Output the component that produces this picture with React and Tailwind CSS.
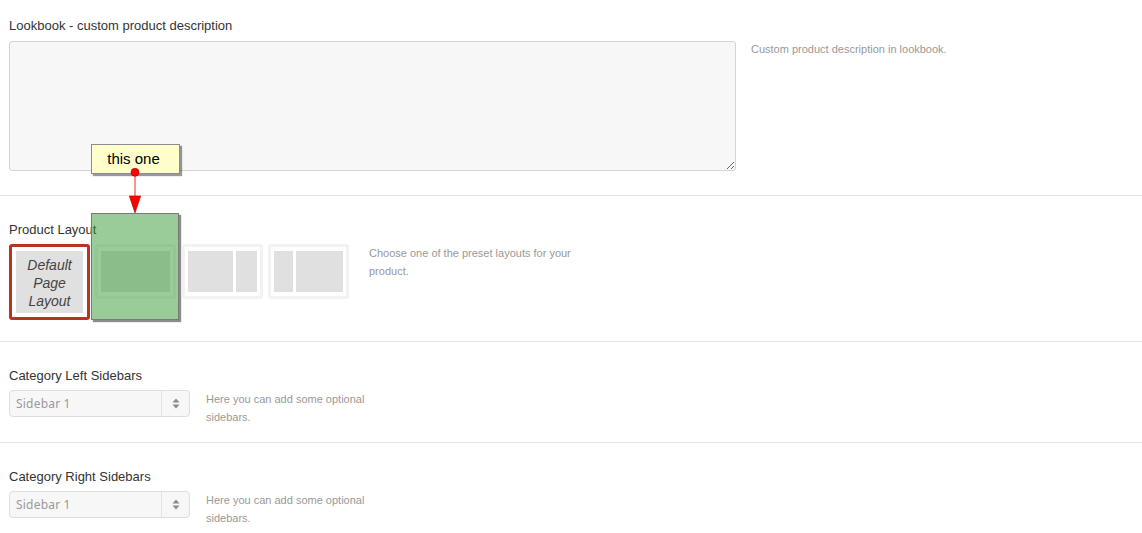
import React from "react";

function HelpText({ className = "", children }) {
  return (
    <p className={`text-[11px] leading-[18px] text-[#999] ${className}`}>{children}</p>
  );
}

function Thumb({ children }) {
  return (
    <div className="w-[81px] h-[55px] bg-[#f2f2f2] rounded-[3px] p-[3px]">
      <div className="h-full bg-white px-[3px] py-[4px] flex gap-[3px]">{children}</div>
    </div>
  );
}

function SelectBox() {
  return (
    <div className="w-[181px] h-[27px] border border-[#dedede] bg-[#f7f7f7] rounded-[4px] flex items-center">
      <span className="flex-1 pl-[6px] text-[12px] text-[#999] font-['Noto_Sans','Open_Sans',sans-serif] tracking-[0.2px]">
        Sidebar 1
      </span>
      <span className="w-[28px] h-full border-l border-[#e3e3e3] flex items-center justify-center">
        <svg width="8" height="11" viewBox="0 0 8 11">
          <path d="M4 0.5 L7.5 4.5 H0.5 Z" fill="#8a8a8a" />
          <path d="M4 10.5 L7.5 6.5 H0.5 Z" fill="#8a8a8a" />
        </svg>
      </span>
    </div>
  );
}

function SidebarSection({ title }) {
  return (
    <section className="px-[9px] pt-[24px] pb-[16px] border-b border-[#e3e3e3]">
      <h3 className="text-[13px] leading-5 text-[#333]">{title}</h3>
      <div className="mt-[4px] flex items-start gap-[16px]">
        <SelectBox />
        <HelpText className="w-[170px]">Here you can add some optional sidebars.</HelpText>
      </div>
    </section>
  );
}

export default function App() {
  return (
    <div className="relative w-[1142px] h-[533px] overflow-hidden bg-white font-['Liberation_Sans',Arial,sans-serif] text-[#333]">
      {/* lookbook description */}
      <section className="px-[9px] pt-[16px] pb-[24px] border-b border-[#e3e3e3]">
        <h3 className="text-[13px] leading-5">Lookbook - custom product description</h3>
        <div className="mt-[5px] flex items-start gap-[15px]">
          <textarea className="block w-[727px] h-[130px] border border-[#d4d4d4] rounded-[3px] bg-[#f7f7f7] outline-none" />
          <HelpText className="-mt-[1px]">Custom product description in lookbook.</HelpText>
        </div>
      </section>

      {/* product layout */}
      <section className="px-[9px] pt-[24px] pb-[21px] border-b border-[#e3e3e3]">
        <h3 className="text-[13px] leading-5">Product Layout</h3>
        <div className="mt-[4px] flex items-start">
          <div className="w-[81px] h-[76px] border-[3px] border-[#b93224] rounded-[3px] p-[4px] bg-white">
            <div className="h-full bg-[#e0e0e0] flex items-center justify-center text-center italic text-[14px] leading-[18px] text-[#444] pt-[1px]">
              Default
              <br />
              Page
              <br />
              Layout
            </div>
          </div>
          <div className="ml-[5px]">
            <Thumb>
              <div className="flex-1 bg-[#e0e0e0]" />
            </Thumb>
          </div>
          <div className="ml-[6px]">
            <Thumb>
              <div className="w-[45px] bg-[#e0e0e0]" />
              <div className="flex-1 bg-[#e0e0e0]" />
            </Thumb>
          </div>
          <div className="ml-[5px]">
            <Thumb>
              <div className="w-[19px] bg-[#e0e0e0]" />
              <div className="flex-1 bg-[#e0e0e0]" />
            </Thumb>
          </div>
          <HelpText className="ml-[20px] w-[215px]">
            Choose one of the preset layouts for your product.
          </HelpText>
        </div>
      </section>

      <SidebarSection title="Category Left Sidebars" />
      <SidebarSection title="Category Right Sidebars" />

      {/* annotation overlay */}
      <div className="absolute left-[91px] top-[213px] w-[88px] h-[107px] bg-[rgba(51,153,51,0.5)] border border-[#7a7a7a] shadow-[2px_2px_1px_rgba(0,0,0,0.45)]" />
      <div className="absolute left-[91px] top-[144px] w-[89px] h-[30px] bg-[#ffffcc] border border-[#8c8c8c] shadow-[2px_2px_1px_rgba(0,0,0,0.4)] flex items-center justify-center pr-[4px] text-[15px] text-black">
        this one
      </div>
      <svg className="absolute left-[125px] top-[165px]" width="20" height="50" viewBox="0 0 20 50">
        <line x1="10" y1="7" x2="10" y2="32" stroke="#f07070" strokeWidth="1.5" />
        <path d="M4.3 31 L15.7 31 L10 48 Z" fill="#ff0000" stroke="#b00000" strokeWidth="0.6" />
        <circle cx="10" cy="7.3" r="4" fill="#ff0000" stroke="#a00000" strokeWidth="0.6" />
      </svg>
    </div>
  );
}
